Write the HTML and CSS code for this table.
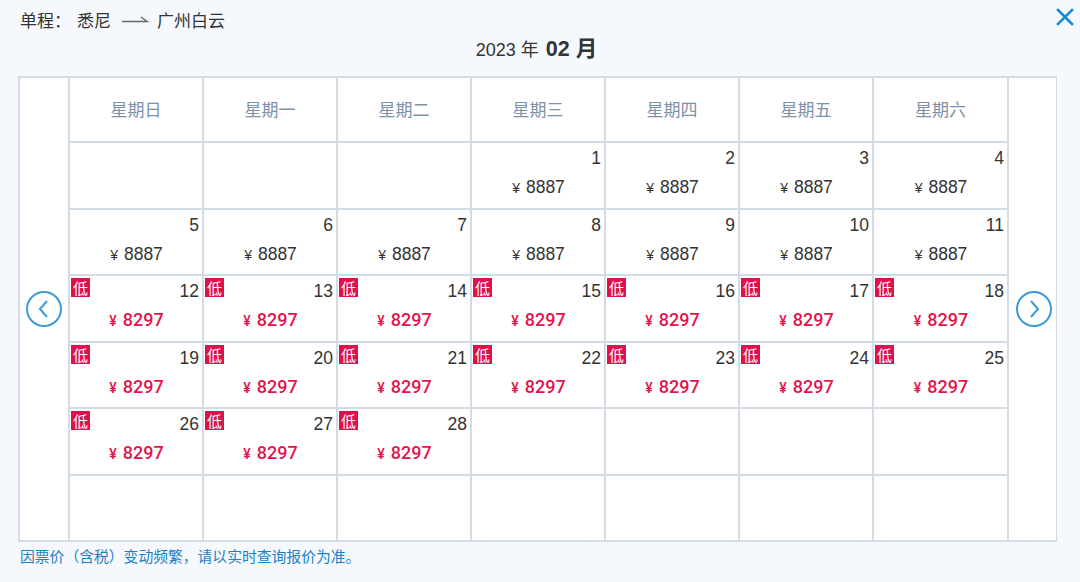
FILE: index.html
```html
<!DOCTYPE html>
<html lang="zh">
<head>
<meta charset="utf-8">
<link rel="stylesheet" href="styles.css">
</head>
<body>
<div class="page">
  <div class="topbar">
    <div class="route">
      <span>单程：</span>
      <span class="city">悉尼</span>
      <svg class="arrow" width="28" height="10" viewBox="0 0 28 10"><path d="M1 7.5 H26 L20 3" fill="none" stroke="#666" stroke-width="1.4"/></svg>
      <span>广州白云</span>
    </div>
    <svg class="close" width="18" height="18" viewBox="0 0 18 18"><path d="M2 2 L16 16 M16 2 L2 16" stroke="#1a88d6" stroke-width="2.6" stroke-linecap="square"/></svg>
  </div>
  <div class="title"><span class="yr">2023 年</span> <b>02 月</b></div>
  <div class="cal">
    <div class="nav"><svg width="38" height="38" viewBox="0 0 38 38"><circle cx="19" cy="19" r="17" fill="none" stroke="#3c9ad8" stroke-width="2"/><path d="M22 11 L15 19 L22 27" fill="none" stroke="#3c9ad8" stroke-width="2"/></svg></div>
    <div class="grid">
      <div class="wk">星期日</div><div class="wk">星期一</div><div class="wk">星期二</div><div class="wk">星期三</div><div class="wk">星期四</div><div class="wk">星期五</div><div class="wk">星期六</div>
      <div class="cell"></div><div class="cell"></div><div class="cell"></div>
      <div class="cell"><div class="d">1</div><div class="p">¥<span>8887</span></div></div>
      <div class="cell"><div class="d">2</div><div class="p">¥<span>8887</span></div></div>
      <div class="cell"><div class="d">3</div><div class="p">¥<span>8887</span></div></div>
      <div class="cell"><div class="d">4</div><div class="p">¥<span>8887</span></div></div>
      <div class="cell"><div class="d">5</div><div class="p">¥<span>8887</span></div></div>
      <div class="cell"><div class="d">6</div><div class="p">¥<span>8887</span></div></div>
      <div class="cell"><div class="d">7</div><div class="p">¥<span>8887</span></div></div>
      <div class="cell"><div class="d">8</div><div class="p">¥<span>8887</span></div></div>
      <div class="cell"><div class="d">9</div><div class="p">¥<span>8887</span></div></div>
      <div class="cell"><div class="d">10</div><div class="p">¥<span>8887</span></div></div>
      <div class="cell"><div class="d">11</div><div class="p">¥<span>8887</span></div></div>
      <div class="cell"><i class="low">低</i><div class="d">12</div><div class="p red">¥<span>8297</span></div></div>
      <div class="cell"><i class="low">低</i><div class="d">13</div><div class="p red">¥<span>8297</span></div></div>
      <div class="cell"><i class="low">低</i><div class="d">14</div><div class="p red">¥<span>8297</span></div></div>
      <div class="cell"><i class="low">低</i><div class="d">15</div><div class="p red">¥<span>8297</span></div></div>
      <div class="cell"><i class="low">低</i><div class="d">16</div><div class="p red">¥<span>8297</span></div></div>
      <div class="cell"><i class="low">低</i><div class="d">17</div><div class="p red">¥<span>8297</span></div></div>
      <div class="cell"><i class="low">低</i><div class="d">18</div><div class="p red">¥<span>8297</span></div></div>
      <div class="cell"><i class="low">低</i><div class="d">19</div><div class="p red">¥<span>8297</span></div></div>
      <div class="cell"><i class="low">低</i><div class="d">20</div><div class="p red">¥<span>8297</span></div></div>
      <div class="cell"><i class="low">低</i><div class="d">21</div><div class="p red">¥<span>8297</span></div></div>
      <div class="cell"><i class="low">低</i><div class="d">22</div><div class="p red">¥<span>8297</span></div></div>
      <div class="cell"><i class="low">低</i><div class="d">23</div><div class="p red">¥<span>8297</span></div></div>
      <div class="cell"><i class="low">低</i><div class="d">24</div><div class="p red">¥<span>8297</span></div></div>
      <div class="cell"><i class="low">低</i><div class="d">25</div><div class="p red">¥<span>8297</span></div></div>
      <div class="cell"><i class="low">低</i><div class="d">26</div><div class="p red">¥<span>8297</span></div></div>
      <div class="cell"><i class="low">低</i><div class="d">27</div><div class="p red">¥<span>8297</span></div></div>
      <div class="cell"><i class="low">低</i><div class="d">28</div><div class="p red">¥<span>8297</span></div></div>
      <div class="cell"></div><div class="cell"></div><div class="cell"></div><div class="cell"></div>
      <div class="cell"></div><div class="cell"></div><div class="cell"></div><div class="cell"></div><div class="cell"></div><div class="cell"></div><div class="cell"></div>
    </div>
    <div class="nav"><svg width="38" height="38" viewBox="0 0 38 38"><circle cx="19" cy="19" r="17" fill="none" stroke="#3c9ad8" stroke-width="2"/><path d="M16 11 L23 19 L16 27" fill="none" stroke="#3c9ad8" stroke-width="2"/></svg></div>
  </div>
  <div class="note">因票价（含税）变动频繁，请以实时查询报价为准。</div>
</div>
</body>
</html>
```
FILE: styles.css
```css
* { box-sizing: border-box; }
html, body { margin: 0; background: #f5f8fc; }
body {
  font-family: "Liberation Sans", Arial, "Noto Sans CJK SC", sans-serif;
  color: #333;
  width: 1080px;
  height: 582px;
  overflow: hidden;
}
.page { padding: 0 23px 0 18px; }
.topbar {
  height: 38px;
  display: flex;
  align-items: center;
  justify-content: space-between;
  padding-left: 2px;
  margin-right: -17px;
}
.route {
  display: flex;
  align-items: center;
  font-size: 17px;
  color: #333;
  font-family: "Noto Sans CJK SC", sans-serif;
}
.city { margin-left: 6px; }
.arrow { margin: 0 8px 0 10px; }
.close { display: block; margin-top: -4px; }
.title {
  height: 22px;
  line-height: 22px;
  text-align: center;
  font-size: 18px;
  margin-bottom: 16px;
  padding-right: 2px;
}
.title .yr { font-size: 18px; }
.title b { font-size: 21.5px; font-weight: bold; margin-left: 2px; }
.cal {
  display: flex;
  gap: 2px;
  background: #d3dbe7;
  border: 2px solid #d3dbe7;
  height: 466px;
}
.nav {
  background: #fff;
  display: flex;
  align-items: center;
  justify-content: center;
  flex: 0 0 48px;
}
.nav:last-child { flex-basis: 47px; padding-left: 3px; }
.nav svg { display: block; }
.grid {
  flex: 0 0 937px;
  display: grid;
  grid-template-columns: 132px 132px 132px 132px 132px 132px 133px;
  grid-template-rows: 63px repeat(6, 64.5px);
  gap: 2px;
}
.wk {
  background: #fff;
  display: flex;
  align-items: center;
  justify-content: center;
  font-size: 17px;
  color: #7d91a9;
  font-family: "Noto Sans CJK SC", sans-serif;
  padding-bottom: 3px;
}
.cell {
  background: #fff;
  position: relative;
  padding: 5px 3px 0 0;
}
.d {
  text-align: right;
  font-size: 17.5px;
  line-height: 20px;
  color: #333;
}
.p {
  margin-top: 9px;
  text-align: center;
  line-height: 20px;
  font-size: 14px;
  color: #333;
  padding-left: 4px;
}
.p span { font-size: 17.5px; margin-left: 6px; }
.p.red { color: #e5134a; font-family: Roboto, "Liberation Sans", sans-serif; font-weight: 500; }
.p.red span { font-size: 18px; }
.low {
  position: absolute;
  left: 1px;
  top: 2px;
  width: 19px;
  height: 19px;
  background: #e0104a;
  color: #fff;
  font-style: normal;
  font-size: 15px;
  line-height: 19px;
  text-align: center;
  font-family: "Noto Sans CJK SC", sans-serif;
}
.note {
  margin-top: 5px;
  font-size: 14.8px;
  line-height: 18px;
  color: #1c80c6;
  padding-left: 2px;
  font-family: "Noto Sans CJK SC", sans-serif;
}
```
